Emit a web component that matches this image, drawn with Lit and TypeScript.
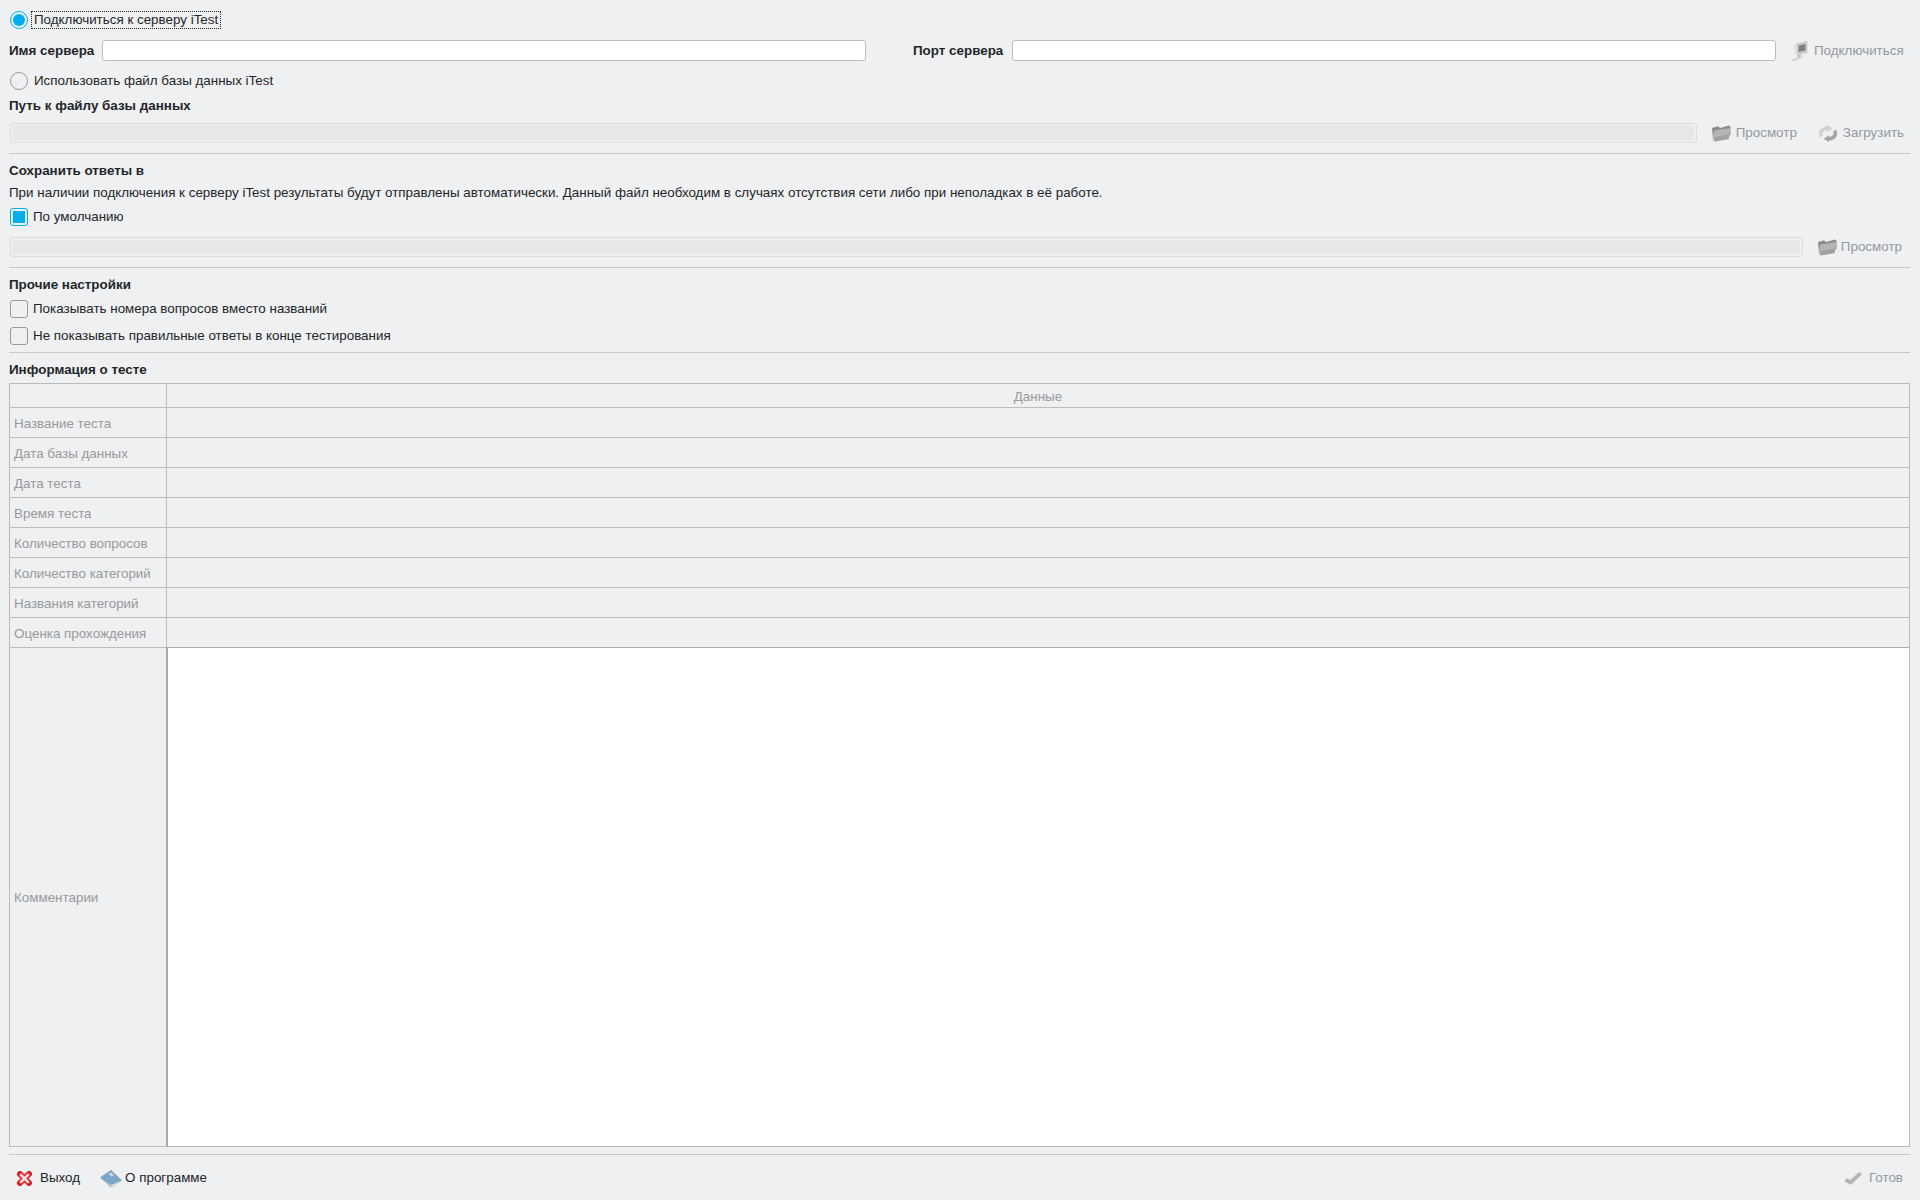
import { LitElement, html, css } from "lit";
import { customElement } from "lit/decorators.js";

const folder = html`<svg class="ico" width="19" height="17" viewBox="0 0 19 17"><path d="M0 3 L6 1.200 L8 3 L17 .6 L18.500 1.500 V10 L4 12 L1 13 Z" fill="#8b8c8c"/><path d="M2.500 5.500 L18.500 3 L16.500 14 L2.500 16.500 L.5 14 Z" fill="#b4b5b5"/><path d="M3 12 L17.500 9.500 L16.500 14 L2.500 16.500 Z" fill="#a0a1a1"/></svg>`;
const reload = html`<svg class="ico" width="20" height="17" viewBox="0 0 20 17"><path d="M3.500 11.500 C1 7 4.500 3.200 9.500 3.200" fill="none" stroke="#d0d1d1" stroke-width="3.600"/><path d="M9 0 L14.500 3.500 L9 7 Z" fill="#d0d1d1"/><path d="M16.500 5.500 C19 10 15.500 13.800 10.500 13.800" fill="none" stroke="#a3a4a4" stroke-width="3.600"/><path d="M11 10.300 L5.500 13.800 L11 17 Z" fill="#a3a4a4"/></svg>`;
const computer = html`<svg class="ico" width="16" height="20" viewBox="0 0 16 20"><path d="M4 2.500 L15.500 0 V12 L5 14 Z" fill="#cbcccc"/><path d="M6.500 4.500 L13.500 3 V9.500 L6.500 11 Z" fill="#808181"/><path d="M2 4 L4.500 2.500 L5 14 L2.500 13 Z" fill="#e0e1e1"/><path d="M5 14 L9 13.300 V16 L5 17 Z" fill="#c4c5c5"/><path d="M0 18 L11 15.500 L12 16.500 L2 20 L0 19.500 Z" fill="#d6d7d7"/></svg>`;
const check = html`<svg class="ico" width="17" height="13" viewBox="0 0 17 13"><path d="M2 8.500 L5.500 10.500 L14.500 2.200" fill="none" stroke="#b3b4b4" stroke-width="3.800" stroke-linecap="round" stroke-linejoin="round"/></svg>`;
const exit = html`<svg class="ico" width="15" height="15" viewBox="0 0 15 15"><path d="M3 3 L12 12 M12 3 L3 12" fill="none" stroke="#dd1f26" stroke-width="6" stroke-linecap="round"/><path d="M4 4 L11 11 M11 4 L4 11" fill="none" stroke="#fbd6d6" stroke-width="2.800" stroke-linecap="round"/></svg>`;
const book = html`<svg class="ico" width="22" height="17" viewBox="0 0 22 17"><path d="M0 7.500 L11 0 L22 10.500 L12 17 L10.500 17 Z" fill="#8a9fb0"/><path d="M0.500 8.500 L11 15 L21.500 10.500 L12 16.800 Z" fill="#e3e6e8"/><path d="M0.500 7.500 L11 .6 L21 10 L11.500 14.500 Z" fill="#7ba6c7"/><path d="M8.500 4 L11 2.500 L14 5 L11.500 6.500 Z" fill="#cfdde8"/></svg>`;

const ROWS = ["Название теста", "Дата базы данных", "Дата теста", "Время теста", "Количество вопросов", "Количество категорий", "Названия категорий", "Оценка прохождения"];

@customElement("app-root")
export class AppRoot extends LitElement {
  static styles = css`
    :host {
      display: block;
      width: 1920px;
      height: 1200px;
      overflow: hidden;
      background: #eff0f1;
      color: #232629;
      font: 13.4px/16px "Liberation Sans", Arial, sans-serif;
    }
    .page { display: flex; flex-direction: column; height: 1200px; padding: 0 10px 0 9px; box-sizing: border-box; }
    .row { display: flex; align-items: center; flex: none; }
    b { font-weight: 700; }
    .radio, .checkbox { flex: none; width: 16px; height: 16px; margin-left: 1px; border: 1px solid #98999b; background: #eff0f1; }
    .radio { border-radius: 50%; margin-right: 6px; }
    .checkbox { border-radius: 3px; margin-right: 5px; }
    .on { border-color: #00aeef; position: relative; }
    .on::after { content: ""; position: absolute; inset: 2px; background: #00aeef; }
    .radio.on::after { border-radius: 50%; }
    .focus { outline: 1px dotted #232629; padding: 0 2px; margin-left: -2px; }
    .input { flex: 1 1 0; height: 21px; box-sizing: border-box; border: 1px solid #bcbdbe; border-radius: 3px; background: #fff; }
    .disabled { flex: 1 1 0; height: 20px; box-sizing: border-box; margin-left: 1px; border: 1px solid #dcddde; border-radius: 3px; background: #e7e7e7; box-shadow: inset 0 0 0 2px #eeeff0; }
    .btn { display: flex; align-items: center; flex: none; color: #92999f; }
    .ico { flex: none; display: block; }
    .sep { flex: none; height: 1px; background: #c6c7c8; }
    .grid { flex: none; display: grid; grid-template-columns: 157px 1fr; grid-template-rows: 24px repeat(8, 30px) 499px; height: 764px; box-sizing: border-box; border-top: 1px solid #b9babb; border-left: 1px solid #b9babb; border-right: 1px solid #b9babb; color: #98999b; margin-top: 5px; }
    .cell { display: flex; align-items: center; padding: 2px 0 0 4px; border-bottom: 1px solid #bcbdbe; border-right: 1px solid #bcbdbe; box-sizing: border-box; min-width: 0; }
    .cell.last { border-right: 0; }
    .head { justify-content: center; padding-left: 0; }
    .note { background: #fff; border: 1px solid #b5b6b7; border-top-color: #a9aaab; border-left: 2px solid #a9aaab; margin-left: -1px; margin-top: -1px; padding: 0; }
    .foot { justify-content: space-between; height: 30px; margin-top: 8px; }
    .left { display: flex; align-items: center; padding-left: 8px; }
    .h18 { height: 18px; }
    .h16 { height: 16px; }
    .h20 { height: 20px; }
    .h21 { height: 21px; }
    .mt6 { margin-top: 6px; }
    .mt7 { margin-top: 7px; }
    .mt8 { margin-top: 8px; }
    .mt9 { margin-top: 9px; }
    .mt10 { margin-top: 10px; }
    .mt11 { margin-top: 11px; }
    .name-label { width: 93px; }
    .port-label { width: 99px; margin-left: 47px; }
    .connect { width: 134px; padding-left: 16px; box-sizing: border-box; }
    .gap3 { margin-left: 3px; }
    .gap4 { margin-left: 4px; }
    .gap5 { margin-left: 5px; }
    .gap6 { margin-left: 6px; }
    .gap7 { margin-left: 7px; }
    .gap8 { margin-left: 8px; }
    .browse { margin-left: 15px; }
    .load { margin-left: 21px; margin-right: 6px; }
    .browse-end { margin-right: 8px; }
    .about { margin-left: 20px; }
    .done { margin-right: 7px; }
  `;

  render() {
    return html`<div class="page">
      <div class="row h18 mt11">
        <span class="radio on"></span><span class="focus">Подключиться к серверу iTest</span>
      </div>
      <div class="row h21 mt11">
        <b class="name-label">Имя сервера</b>
        <div class="input"></div>
        <b class="port-label">Порт сервера</b>
        <div class="input"></div>
        <div class="btn connect">${computer}<span class="gap6">Подключиться</span></div>
      </div>
      <div class="row h18 mt11">
        <span class="radio"></span><span>Использовать файл базы данных iTest</span>
      </div>
      <div class="row h16 mt8"><b>Путь к файлу базы данных</b></div>
      <div class="row h20 mt9">
        <div class="disabled"></div>
        <div class="btn browse">${folder}<span class="gap5">Просмотр</span></div>
        <div class="btn load">${reload}<span class="gap5">Загрузить</span></div>
      </div>
      <div class="sep mt10"></div>
      <div class="row h16 mt9"><b>Сохранить ответы в</b></div>
      <div class="row h16 mt6">При наличии подключения к серверу iTest результаты будут отправлены автоматически. Данный файл необходим в случаях отсутствия сети либо при неполадках в её работе.</div>
      <div class="row h18 mt7"><span class="checkbox on"></span><span>По умолчанию</span></div>
      <div class="row h20 mt11">
        <div class="disabled"></div>
        <div class="btn browse browse-end">${folder}<span class="gap4">Просмотр</span></div>
      </div>
      <div class="sep mt10"></div>
      <div class="row h16 mt9"><b>Прочие настройки</b></div>
      <div class="row h18 mt7"><span class="checkbox"></span><span>Показывать номера вопросов вместо названий</span></div>
      <div class="row h18 mt9"><span class="checkbox"></span><span>Не показывать правильные ответы в конце тестирования</span></div>
      <div class="sep mt7"></div>
      <div class="row h16 mt9"><b>Информация о тесте</b></div>
      <div class="grid">
        <div class="cell"></div>
        <div class="cell head last">Данные</div>
        ${ROWS.map((r) => html`<div class="cell">${r}</div><div class="cell last"></div>`)}
        <div class="cell">Комментарии</div>
        <div class="cell last note"></div>
      </div>
      <div class="sep mt7"></div>
      <div class="row foot">
        <div class="left">
          <span class="row">${exit}<span class="gap8">Выход</span></span>
          <span class="row about">${book}<span class="gap3">О программе</span></span>
        </div>
        <div class="btn done">${check}<span class="gap7">Готов</span></div>
      </div>
    </div>`;
  }
}
